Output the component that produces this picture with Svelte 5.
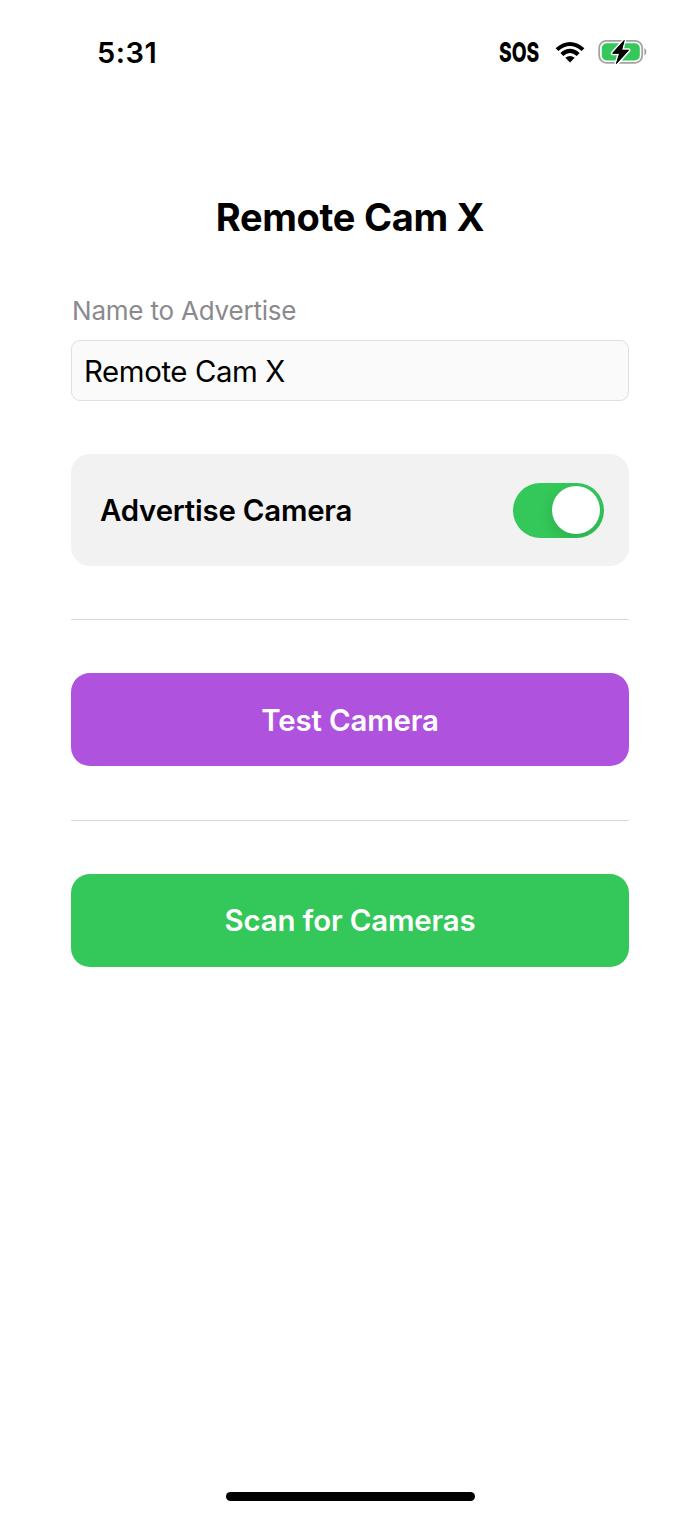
<script>
	let name = 'Remote Cam X';
	let advertising = true;
</script>

<div class="screen">
	<header class="status-bar">
		<span class="time">5:31</span>
		<div class="indicators">
			<span class="sos">SOS</span>
			<svg class="wifi" width="30" height="22" viewBox="0 0 30 22">
				<path d="M.6 7.3Q15-5.5 29.4 7.3L26.6 10.1Q15 0 3.4 10.1Z" />
				<path d="M5.4 12Q15 3.6 24.6 12L21.7 14.9Q15 9 8.3 14.9Z" />
				<path d="M10.3 16.8Q15 13 19.7 16.8L15 21.6Z" />
			</svg>
			<svg class="battery" width="50" height="28" viewBox="0 0 50 28">
				<rect x="1.2" y="2.8" width="43" height="22" rx="7.2" fill="none" stroke="#a3a3a3" stroke-width="1.8" />
				<path d="M46.4 10v7.6q2-1.2 2-3.8t-2-3.8z" fill="#a3a3a3" />
				<rect x="3.8" y="5.2" width="38" height="17.2" rx="5" fill="#34c759" />
				<path
					d="M26.2 2.4L14.6 15.3H21.6L18.4 25.6L30.6 12.2H23.6Z"
					fill="#000"
					stroke="#fff"
					stroke-width="3.8"
					stroke-linejoin="round"
					paint-order="stroke"
				/>
				<path
					d="M26.2 2.4L14.6 15.3H21.6L18.4 25.6L30.6 12.2H23.6Z"
					fill="#000"
					stroke="#000"
					stroke-width="1"
					stroke-linejoin="round"
				/>
			</svg>
		</div>
	</header>

	<main>
		<h1>Remote Cam X</h1>

		<label class="field">
			<span class="field-label">Name to Advertise</span>
			<input type="text" bind:value={name} />
		</label>

		<div class="card">
			<span class="card-label">Advertise Camera</span>
			<button
				class="switch"
				class:on={advertising}
				role="switch"
				aria-checked={advertising}
				aria-label="Advertise Camera"
				on:click={() => (advertising = !advertising)}
			>
				<span class="knob"></span>
			</button>
		</div>

		<hr />
		<button class="action purple">Test Camera</button>
		<hr />
		<button class="action green">Scan for Cameras</button>
	</main>

	<div class="home-indicator"></div>
</div>

<style>
	:global(body) {
		background: #fff;
	}

	.screen {
		display: flex;
		flex-direction: column;
		align-items: center;
		box-sizing: border-box;
		width: 700px;
		height: 1515px;
		padding-bottom: 14px;
		overflow: hidden;
		background: #fff;
		color: #000;
		font-family: Inter, 'Liberation Sans', sans-serif;
	}

	.status-bar {
		display: flex;
		justify-content: space-between;
		align-items: center;
		box-sizing: border-box;
		width: 100%;
		height: 104px;
		padding: 0 52px 0 97px;
	}

	.time {
		font-size: 29px;
		font-weight: 600;
		letter-spacing: 0.5px;
	}

	.indicators {
		display: flex;
		align-items: center;
	}

	.sos {
		width: 41px;
		margin-right: 15px;
		font-size: 27.5px;
		font-weight: 800;
		white-space: nowrap;
		transform: scaleX(0.7);
		transform-origin: left center;
	}

	.wifi {
		margin-right: 13px;
	}

	main {
		display: flex;
		flex-direction: column;
		flex: 1;
		width: 558px;
	}

	h1 {
		margin: 88px 0 0;
		font-size: 38px;
		font-weight: 700;
		line-height: 50px;
		letter-spacing: -0.3px;
		text-align: center;
	}

	.field {
		display: flex;
		flex-direction: column;
		margin-top: 52px;
	}

	.field-label {
		margin-bottom: 12px;
		padding-left: 1px;
		color: #8a8a8e;
		font-size: 26px;
		line-height: 34px;
		letter-spacing: -0.2px;
	}

	input {
		box-sizing: border-box;
		width: 100%;
		height: 61px;
		padding: 2px 12px 0;
		border: 1px solid #dfdfdf;
		border-radius: 9px;
		outline: 0;
		background: #fafafa;
		color: #000;
		font-family: inherit;
		font-size: 29.4px;
		letter-spacing: -0.4px;
	}

	.card {
		display: flex;
		justify-content: space-between;
		align-items: center;
		box-sizing: border-box;
		height: 112px;
		margin-top: 53px;
		padding: 0 25px 0 29px;
		border-radius: 19px;
		background: #f2f2f2;
	}

	.card-label {
		font-size: 29.4px;
		font-weight: 600;
		letter-spacing: -0.2px;
	}

	.switch {
		display: flex;
		justify-content: flex-start;
		align-items: center;
		box-sizing: border-box;
		width: 91px;
		height: 55px;
		padding: 0 4px;
		border: 0;
		border-radius: 28px;
		background: #e9e9ea;
		overflow: hidden;
	}

	.switch.on {
		justify-content: flex-end;
		background: #34c759;
	}

	.knob {
		width: 48px;
		height: 48px;
		border-radius: 50%;
		background: #fff;
		box-shadow: 0 5px 14px rgba(0, 0, 0, 0.13);
	}

	hr {
		width: 100%;
		height: 1px;
		margin: 53px 0;
		border: 0;
		background: #d9d9da;
	}

	.action {
		height: 93px;
		padding: 2px 0 0;
		border: 0;
		border-radius: 19px;
		color: #fff;
		font-family: inherit;
		font-size: 29.4px;
		font-weight: 600;
		letter-spacing: -0.15px;
	}

	.purple {
		margin-bottom: 1px;
		background: #af52de;
	}

	.green {
		padding-top: 0;
		background: #34c759;
	}

	.home-indicator {
		width: 249px;
		height: 9px;
		border-radius: 5px;
		background: #000;
	}
</style>
